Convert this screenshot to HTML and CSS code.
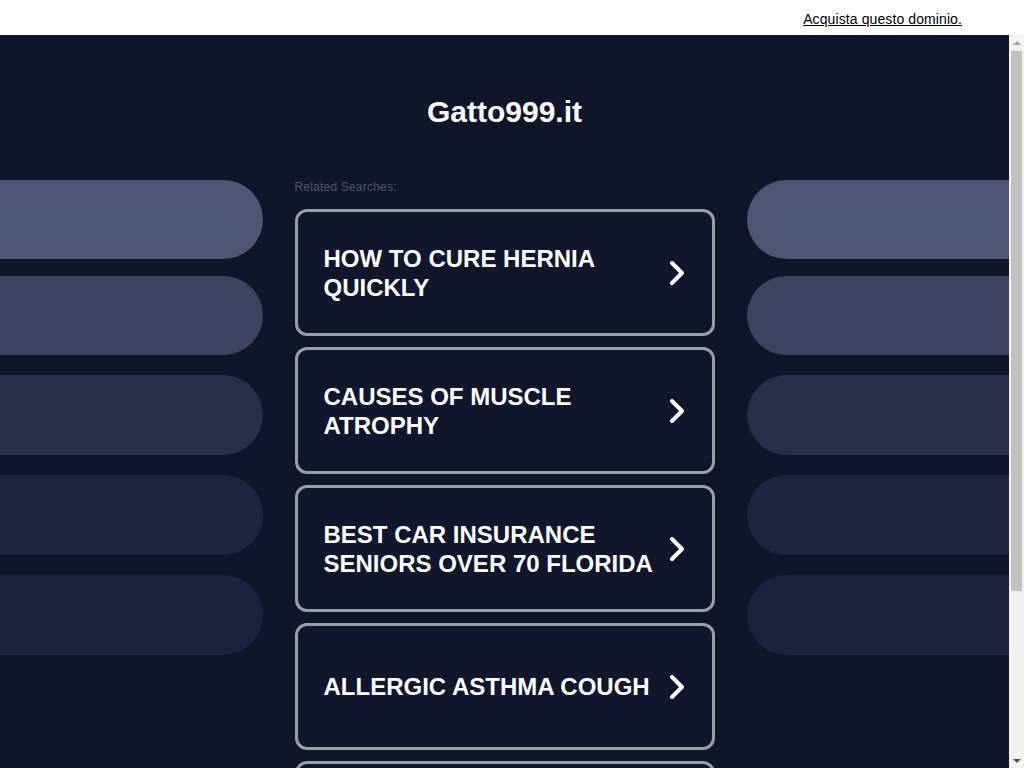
FILE: index.html
```html
<!DOCTYPE html>
<html lang="it">
<head>
    <meta charset="UTF-8">
    <meta name="viewport" content="width=device-width, initial-scale=1.0">
    <title>Gatto999.it</title>
    <link rel="stylesheet" href="styles.css">
</head>
<body>

    <!-- Barra superiore -->
    <div class="topbar">
        <a href="#" class="buy-link">Acquista questo dominio.</a>
    </div>

    <div class="frame">
        <!-- Contenuto -->
        <div class="content">
            <h1 class="domain">Gatto999.it</h1>

            <div class="layout">
                <div class="side side-left">
                    <div class="pill pill1"></div>
                    <div class="pill pill2"></div>
                    <div class="pill pill3"></div>
                    <div class="pill pill4"></div>
                    <div class="pill pill5"></div>
                </div>

                <div class="searches">
                    <p class="label">Related Searches:</p>

                    <a href="#" class="card">
                        <span class="card-text">HOW TO CURE HERNIA QUICKLY</span>
                        <svg class="chevron" width="18" height="26" viewBox="0 0 18 26"><path d="M4 3 L14 13 L4 23" /></svg>
                    </a>
                    <a href="#" class="card">
                        <span class="card-text">CAUSES OF MUSCLE ATROPHY</span>
                        <svg class="chevron" width="18" height="26" viewBox="0 0 18 26"><path d="M4 3 L14 13 L4 23" /></svg>
                    </a>
                    <a href="#" class="card">
                        <span class="card-text">BEST CAR INSURANCE SENIORS OVER 70 FLORIDA</span>
                        <svg class="chevron" width="18" height="26" viewBox="0 0 18 26"><path d="M4 3 L14 13 L4 23" /></svg>
                    </a>
                    <a href="#" class="card">
                        <span class="card-text">ALLERGIC ASTHMA COUGH</span>
                        <svg class="chevron" width="18" height="26" viewBox="0 0 18 26"><path d="M4 3 L14 13 L4 23" /></svg>
                    </a>
                    <a href="#" class="card card-partial"></a>
                </div>

                <div class="side side-right">
                    <div class="pill pill1"></div>
                    <div class="pill pill2"></div>
                    <div class="pill pill3"></div>
                    <div class="pill pill4"></div>
                    <div class="pill pill5"></div>
                </div>
            </div>
        </div>

        <!-- Barra di scorrimento -->
        <div class="scrollbar">
            <div class="arrow arrow-up"></div>
            <div class="track">
                <div class="thumb"></div>
            </div>
            <div class="arrow arrow-down"></div>
        </div>
    </div>

</body>
</html>
```

FILE: styles.css
```css
* {
    margin: 0;
    padding: 0;
    box-sizing: border-box;
}

body, html {
    height: 100%;
    font-family: "Liberation Sans", Arial, sans-serif;
    overflow: hidden;
}

.topbar {
    height: 35px;
    background-color: #fff;
    display: flex;
    align-items: center;
    justify-content: flex-end;
    padding-right: 62px;
}

.buy-link {
    font-size: 14px;
    letter-spacing: 0.1px;
    color: #000;
    text-decoration: underline;
    margin-top: 3px;
}

.frame {
    height: calc(100% - 35px);
    display: flex;
    background-color: #101629;
}

.content {
    flex: 1;
    overflow: hidden;
}

.domain {
    font-size: 30px;
    line-height: 36px;
    color: #fff;
    text-align: center;
    padding-top: 59px;
    margin-bottom: 50px;
}

.layout {
    display: grid;
    grid-template-columns: 1fr 420px 1fr;
    column-gap: 32px;
}

/* colonne decorative */
.side {
    display: flex;
    flex-direction: column;
    gap: 20px;
}

.pill {
    height: 80px;
}

.side-left .pill {
    border-radius: 0 40px 40px 0;
}

.side-right .pill {
    border-radius: 40px 0 0 40px;
}

.pill1 { background-color: #4f5574; height: 79px; }
.pill2 { background-color: #3d4360; margin-top: -3px; height: 79px; }
.pill3 { background-color: #292e4b; }
.pill4 { background-color: #1f2441; }
.pill5 { background-color: #1c213d; }

/* ricerche correlate */
.label {
    font-size: 12px;
    letter-spacing: 0.2px;
    line-height: 14px;
    color: #50566b;
    margin-bottom: 15px;
}

.card {
    display: flex;
    align-items: center;
    gap: 12px;
    height: 127px;
    padding: 0 26px;
    margin-bottom: 11px;
    border: 3px solid #9b9ea4;
    border-radius: 12px;
    background-color: #10162b;
    color: #fff;
    text-decoration: none;
}

.card-text {
    flex: 1;
    font-size: 24px;
    line-height: 29px;
    font-weight: bold;
}

.chevron {
    flex-shrink: 0;
}

.chevron path {
    fill: none;
    stroke: #fff;
    stroke-width: 4;
    stroke-linecap: round;
    stroke-linejoin: round;
}

/* barra di scorrimento disegnata */
.scrollbar {
    width: 15px;
    display: flex;
    flex-direction: column;
    background-color: #f1f1f1;
}

.arrow {
    height: 15px;
    display: flex;
    align-items: center;
    justify-content: center;
}

.arrow::after {
    content: "";
    border-left: 4px solid transparent;
    border-right: 4px solid transparent;
}

.arrow-up::after {
    border-bottom: 4px solid #a3a3a3;
}

.arrow-down::after {
    border-top: 4px solid #505050;
}

.track {
    flex: 1;
    padding: 1px 2px;
}

.thumb {
    height: 540px;
    background-color: #c1c1c1;
}
```
